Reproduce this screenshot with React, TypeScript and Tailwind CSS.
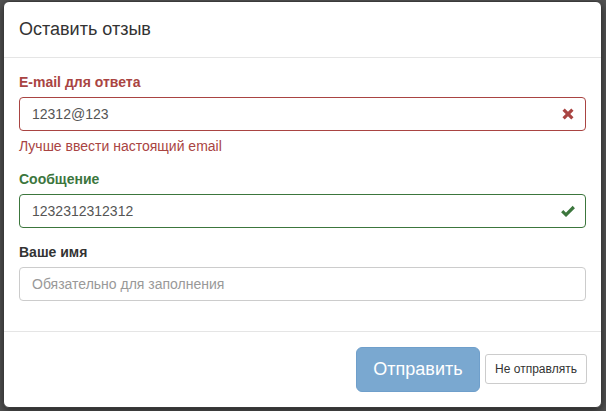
import React from "react";

const FONT = { fontFamily: '"Liberation Sans", Arial, Helvetica, sans-serif' };

function XIcon() {
  return (
    <svg width="12" height="12" viewBox="0 0 12 12">
      <path d="M1.6 1.6 L10.4 10.4 M10.4 1.6 L1.6 10.4" stroke="#a94442" strokeWidth="3.2" strokeLinecap="butt" fill="none" />
    </svg>
  );
}

function CheckIcon() {
  return (
    <svg width="14" height="12" viewBox="0 0 14 12">
      <path d="M1.2 6.2 L5 9.8 L12.8 2" stroke="#3c763d" strokeWidth="3.2" strokeLinecap="butt" strokeLinejoin="miter" fill="none" />
    </svg>
  );
}

export default function App() {
  return (
    <div className="w-[606px] h-[411px] bg-[#525252] overflow-hidden pt-[1px] pl-[3px]" style={FONT}>
      <div className="w-[599px] bg-white border border-[#3a3a3a] rounded-[6px] shadow-[0_3px_9px_rgba(0,0,0,0.5)] text-[14px] text-[#333]">
        {/* header */}
        <div className="px-[15px] py-[15px] border-b border-[#e5e5e5]">
          <h4 className="text-[18px] leading-[25px] text-[#333] font-normal">Оставить отзыв</h4>
        </div>
        {/* body */}
        <div className="px-[15px] pt-[14px] pb-[15px]">
          <div className="flex flex-col">
            <label className="text-[14px] leading-[20px] font-bold text-[#a94442] mb-[5px]">E-mail для ответа</label>
            <div className="relative">
              <div className="h-[34px] border border-[#a94442] rounded-[4px] pl-[12px] pr-[42px] flex items-center text-[14px] text-[#555]">
                12312@123
              </div>
              <div className="absolute right-0 top-0 w-[34px] h-[34px] flex items-center justify-center pr-[2px]">
                <XIcon />
              </div>
            </div>
            <div className="mt-[5px] leading-[20px] text-[14px] text-[#a94442]">Лучше ввести настоящий email</div>
          </div>

          <div className="flex flex-col mt-[13px]">
            <label className="text-[14px] leading-[20px] font-bold text-[#3c763d] mb-[5px]">Сообщение</label>
            <div className="relative">
              <div className="h-[34px] border border-[#3c763d] rounded-[4px] pl-[12px] pr-[42px] flex items-center text-[14px] text-[#555]">
                1232312312312
              </div>
              <div className="absolute right-0 top-0 w-[34px] h-[34px] flex items-center justify-center pr-[2px]">
                <CheckIcon />
              </div>
            </div>
          </div>

          <div className="flex flex-col mt-[14px]">
            <label className="text-[14px] leading-[20px] font-bold text-[#333] mb-[5px]">Ваше имя</label>
            <div className="h-[34px] border border-[#ccc] rounded-[4px] pl-[12px] flex items-center text-[14px] text-[#999]">
              Обязательно для заполнения
            </div>
          </div>
          <div className="h-[15px]" />
        </div>
        {/* footer */}
        <div className="border-t border-[#e5e5e5] pl-[15px] pr-[14px] pt-[15px] pb-[15px] flex justify-end items-center gap-[5px]">
          <div className="w-[124px] h-[45px] rounded-[6px] bg-[#7aa8d0] border border-[#6f9fcb] text-white text-[18px] flex items-center justify-center">
            Отправить
          </div>
          <div className="w-[102px] h-[30px] rounded-[3px] bg-white border border-[#ccc] text-[#333] text-[12px] flex items-center justify-center mt-[-1px]">
            Не отправлять
          </div>
        </div>
      </div>
    </div>
  );
}
